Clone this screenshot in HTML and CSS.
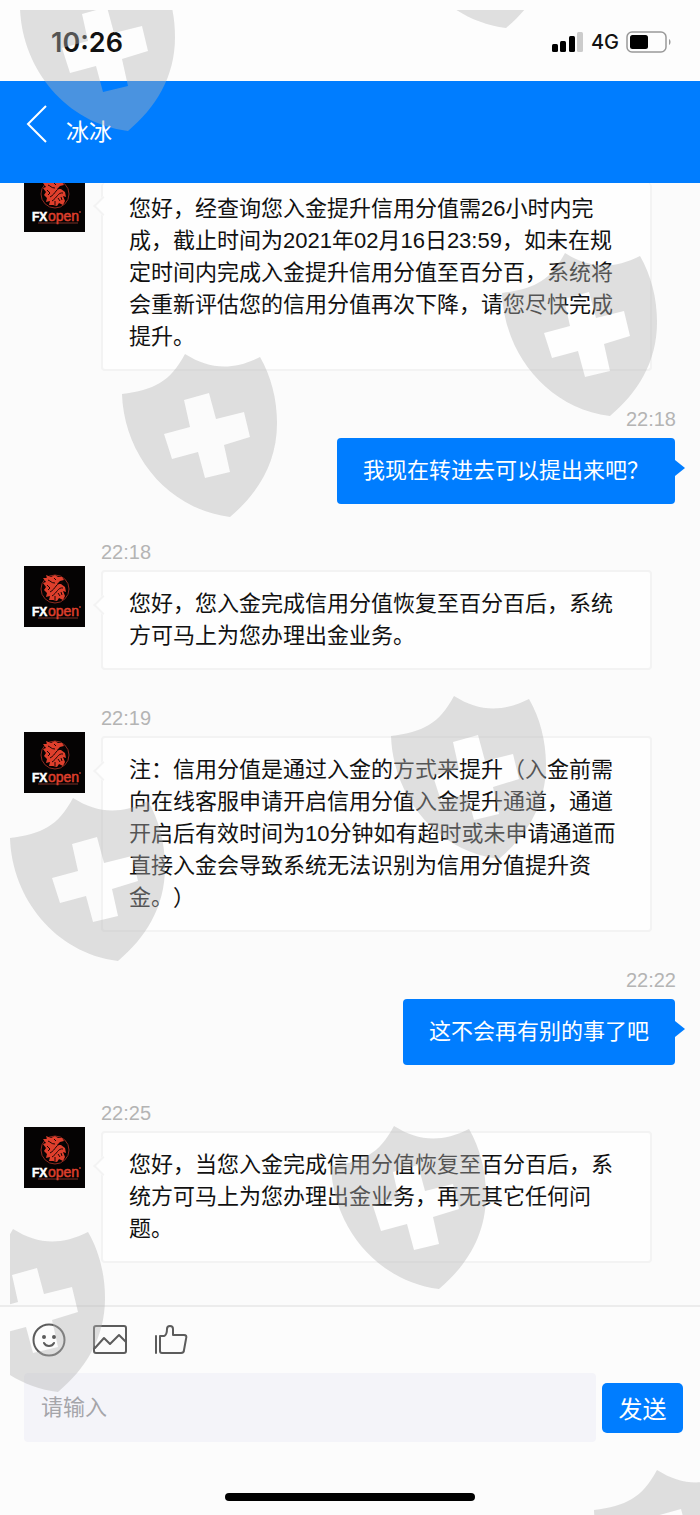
FILE: index.html
```html
<!DOCTYPE html>
<html lang="zh-CN">
<head>
<meta charset="utf-8">
<meta name="viewport" content="width=device-width, initial-scale=1">
<title>冰冰</title>
<link rel="stylesheet" href="styles.css">
</head>
<body>
<svg class="defs" width="0" height="0" aria-hidden="true">
  <symbol id="emblem" viewBox="0 0 61 61">
    <rect width="61" height="61" fill="#050303"/>
    <circle cx="31" cy="23" r="14" fill="none" stroke="#8d2a20" stroke-width="1"/>
    <path fill="#df3f2c" d="M19 12L23 12L22 9L27 11L31 9L34 11L38 11L40 14L36 15L33 18L37 18L41 21L42 26L39 25L41 30L39 34L35 32L33 35L29 34L25 34L26 30L22 31L23 27L20 24L22 21L19 17L22 16Z"/>
    <path fill="none" stroke="#1c0504" stroke-width="1" d="M24 14C27 15 27 17 31 17M39 17C32 16 32 23 26 26M39 22C34 21 33 27 28 30M23 19L26 22L24 24M30 12L32 14M34 27L36 30M37 26L38 29M31 30V34"/>
    <path stroke="#7d3029" d="M14 52H54"/>
    <circle cx="56" cy="41" r="1" fill="#a7392c"/>
  </symbol>
  <symbol id="shield" viewBox="0 0 156 164">
    <path fill-rule="evenodd" d="M0 40C32 36 48 28 63 0C87 15 110 17 138 3C149 22 155 45 155 69C155 110 135 140 108 163C45 155 2 100 0 40ZM62 46L68 73L42 80L50 105L76 98L83 124L108 118L102 91L128 83L122 58L94 65L87 39Z"/>
  </symbol>
</svg>

<div class="phone">
  <div class="status">
    <span class="clock">10:26</span>
    <div class="status-right">
      <svg width="32" height="20" viewBox="0 0 32 20" aria-hidden="true">
        <rect x="0" y="12" width="6" height="8" rx="1.500"/>
        <rect x="8" y="9" width="6" height="11" rx="1.500"/>
        <rect x="17" y="4" width="6" height="16" rx="1.500"/>
        <rect x="25" y="0" width="6" height="20" rx="1.500" fill="#ccc"/>
      </svg>
      <span class="network">4G</span>
      <svg width="46" height="22" viewBox="0 0 46 22" aria-hidden="true">
        <rect x="1" y="1" width="39" height="20" rx="5" fill="none" stroke="#999" stroke-width="1.500"/>
        <rect x="4" y="4" width="18" height="14" rx="2.500"/>
        <path d="M43 8c2 1 2 5 0 6z" fill="#999"/>
      </svg>
    </div>
  </div>

  <header class="header">
    <button class="back" type="button" aria-label="返回">
      <svg width="22" height="38" viewBox="0 0 22 38"><path d="M20 1L2 19L20 37" fill="none" stroke="#fff" stroke-width="2"/></svg>
    </button>
    <h1 class="title">冰冰</h1>
  </header>

  <main class="chat">
    <article class="msg in first">
      <svg class="avatar" viewBox="0 0 61 61"><use href="#emblem"/><text x="8" y="50" class="brand-fx">FX</text><text x="24" y="50" class="brand-open">open</text></svg>
      <div class="body">
        <p class="bubble">您好，经查询您入金提升信用分值需26小时内完<br>成，截止时间为2021年02月16日23:59，如未在规<br>定时间内完成入金提升信用分值至百分百，系统将<br>会重新评估您的信用分值再次下降，请您尽快完成<br>提升。</p>
      </div>
    </article>
    <article class="msg out">
      <time class="time">22:18</time>
      <p class="bubble">我现在转进去可以提出来吧？</p>
    </article>
    <article class="msg in">
      <svg class="avatar" viewBox="0 0 61 61"><use href="#emblem"/><text x="8" y="50" class="brand-fx">FX</text><text x="24" y="50" class="brand-open">open</text></svg>
      <div class="body">
        <time class="time">22:18</time>
        <p class="bubble">您好，您入金完成信用分值恢复至百分百后，系统<br>方可马上为您办理出金业务。</p>
      </div>
    </article>
    <article class="msg in">
      <svg class="avatar" viewBox="0 0 61 61"><use href="#emblem"/><text x="8" y="50" class="brand-fx">FX</text><text x="24" y="50" class="brand-open">open</text></svg>
      <div class="body">
        <time class="time">22:19</time>
        <p class="bubble">注：信用分值是通过入金的方式来提升（入金前需<br>向在线客服申请开启信用分值入金提升通道，通道<br>开启后有效时间为10分钟如有超时或未申请通道而<br>直接入金会导致系统无法识别为信用分值提升资<br>金。）</p>
      </div>
    </article>
    <article class="msg out">
      <time class="time">22:22</time>
      <p class="bubble">这不会再有别的事了吧</p>
    </article>
    <article class="msg in">
      <svg class="avatar" viewBox="0 0 61 61"><use href="#emblem"/><text x="8" y="50" class="brand-fx">FX</text><text x="24" y="50" class="brand-open">open</text></svg>
      <div class="body">
        <time class="time">22:25</time>
        <p class="bubble">您好，当您入金完成信用分值恢复至百分百后，系<br>统方可马上为您办理出金业务，再无其它任何问<br>题。</p>
      </div>
    </article>
  </main>

  <footer class="composer">
    <div class="tools">
      <button class="tool" type="button" aria-label="表情">
        <svg width="34" height="34" viewBox="0 0 34 34"><circle cx="17" cy="17" r="15.500"/><path d="M12 20C14 24 20 24 22 20"/><circle cx="12" cy="14" r="1" class="dot"/><circle cx="22" cy="14" r="1" class="dot"/></svg>
      </button>
      <button class="tool" type="button" aria-label="图片">
        <svg width="34" height="34" viewBox="0 0 34 34"><rect x="1" y="3" width="32" height="27" rx="2"/><path d="M2 25L11 15L17 21L26 12L33 19"/></svg>
      </button>
      <button class="tool" type="button" aria-label="点赞">
        <svg width="34" height="34" viewBox="0 0 34 34"><path d="M2 13V30M6 13H10C13 12 13 8 13 6C13 2 19 2 19 6V12H30C32 12 33 13 32 16L30 27C30 29 29 30 27 30H8C7 30 6 29 6 28Z"/></svg>
      </button>
    </div>
    <form class="entry">
      <input class="field" type="text" placeholder="请输入" aria-label="请输入">
      <button class="send" type="button">发送</button>
    </form>
    <div class="home"></div>
  </footer>

  <div class="marks" aria-hidden="true">
    <svg width="100%" height="100%">
      <use href="#shield" x="10" y="-42" width="156" height="164"/>
      <use href="#shield" x="388" y="-145" width="156" height="164"/>
      <use href="#shield" x="112" y="344" width="156" height="164"/>
      <use href="#shield" x="492" y="243" width="156" height="164"/>
      <use href="#shield" x="381" y="686" width="156" height="164"/>
      <use href="#shield" x="0" y="788" width="156" height="164"/>
      <use href="#shield" x="321" y="1116" width="156" height="164"/>
      <use href="#shield" x="-60" y="1219" width="156" height="164"/>
      <use href="#shield" x="584" y="1460" width="156" height="164"/>
    </svg>
  </div>
</div>
</body>
</html>
```
FILE: styles.css
```css
* { box-sizing: border-box; }

body {
  margin: 0;
  background: #fdfdfd;
  color: #111;
  font-family: "Liberation Sans", "Noto Sans CJK SC", sans-serif;
  font-size: 22px;
  text-spacing-trim: space-all;
}

button { border: 0; padding: 0; background: none; font: inherit; }
p, h1 { margin: 0; }
.defs { position: absolute; }

.phone {
  position: relative;
  display: flex;
  flex-direction: column;
  min-height: 100vh;
  overflow: hidden;
}

.status {
  display: flex;
  justify-content: space-between;
  align-items: center;
  height: 81px;
  padding: 3px 28px 0 51px;
  font-family: Inter, sans-serif;
}
.clock { font-size: 27px; font-weight: 600; }
.status-right { display: flex; align-items: center; gap: 7px; }
.network { font-size: 20px; font-weight: 500; }

.header {
  display: flex;
  align-items: center;
  gap: 18px;
  height: 102px;
  padding: 0 26px;
  background: #007dff;
  color: #fff;
}
.back { display: flex; padding-bottom: 16px; }
.title { font-size: 23px; font-weight: 400; line-height: 32px; }

.chat {
  flex: 1;
  padding: 0 24px 42px;
  overflow: hidden;
  background: #fbfbfb;
  border-bottom: 2px solid #ececec;
}

.msg { margin-top: 36px; }
.msg.first { margin-top: 0; }
.in { display: flex; align-items: flex-start; gap: 16px; }
.avatar { flex: none; width: 61px; height: 61px; margin-top: 26px; }
.first .avatar { margin-top: -12px; }
.brand-fx { font: 700 12px "Liberation Sans", sans-serif; fill: #fff; stroke: #fff; stroke-width: 0.5px; }
.brand-open { font: 400 14px "Liberation Sans", sans-serif; fill: #df3f2c; stroke: #df3f2c; stroke-width: 0.5px; }

.time {
  display: block;
  color: #b4b4b4;
  font-size: 20px;
  line-height: 24px;
}
.bubble {
  position: relative;
  line-height: 32px;
  white-space: nowrap;
}
.in .bubble {
  width: 551px;
  margin-top: 6px;
  padding: 16px 26px;
  background: #fefefe;
  border: 2px solid #f3f3f3;
  border-radius: 4px;
}
.first .bubble { margin-top: 0; padding-top: 10px; border-top: 0; }
.in .bubble::before {
  content: "";
  position: absolute;
  left: -7px;
  top: 26px;
  width: 12px;
  height: 12px;
  background: #fefefe;
  border: solid #f3f3f3;
  border-width: 0 0 2px 2px;
  transform: rotate(45deg);
}
.first .bubble::before { top: 16px; }

.out { display: flex; flex-direction: column; align-items: flex-end; }
.out .bubble {
  margin: 7px 1px 0 0;
  padding: 17px 26px;
  background: #007dff;
  border-radius: 4px;
  color: #fff;
}
.out .bubble::after {
  content: "";
  position: absolute;
  left: 100%;
  top: 22px;
  border: solid transparent;
  border-width: 8px 0 8px 10px;
  border-left-color: #007dff;
}

.composer { background: #fcfcfc; }
.tools { display: flex; gap: 27px; padding: 16px 32px; }
.tool { display: flex; }
.tool svg { fill: none; stroke: #5c5c5c; stroke-width: 2; stroke-linecap: round; stroke-linejoin: round; }
.tool .dot { fill: #5c5c5c; }
.entry { display: flex; align-items: center; gap: 6px; padding: 0 17px 0 24px; }
.field {
  flex: 1;
  min-width: 0;
  height: 69px;
  padding: 0 17px;
  border: 0;
  border-radius: 4px;
  background: #f4f4f9;
  font: inherit;
}
.field::placeholder { color: #a5a5aa; opacity: 1; }
.send {
  width: 81px;
  height: 50px;
  border-radius: 5px;
  background: #007dff;
  color: #fff;
  font-size: 24px;
}
.home {
  width: 250px;
  height: 8px;
  margin: 51px auto 14px;
  border-radius: 4px;
  background: #000;
}

.marks {
  position: absolute;
  inset: 10px 0 0 10px;
  overflow: hidden;
  pointer-events: none;
  fill: rgba(180, 180, 180, 0.41);
}
.marks svg { display: block; }
```
